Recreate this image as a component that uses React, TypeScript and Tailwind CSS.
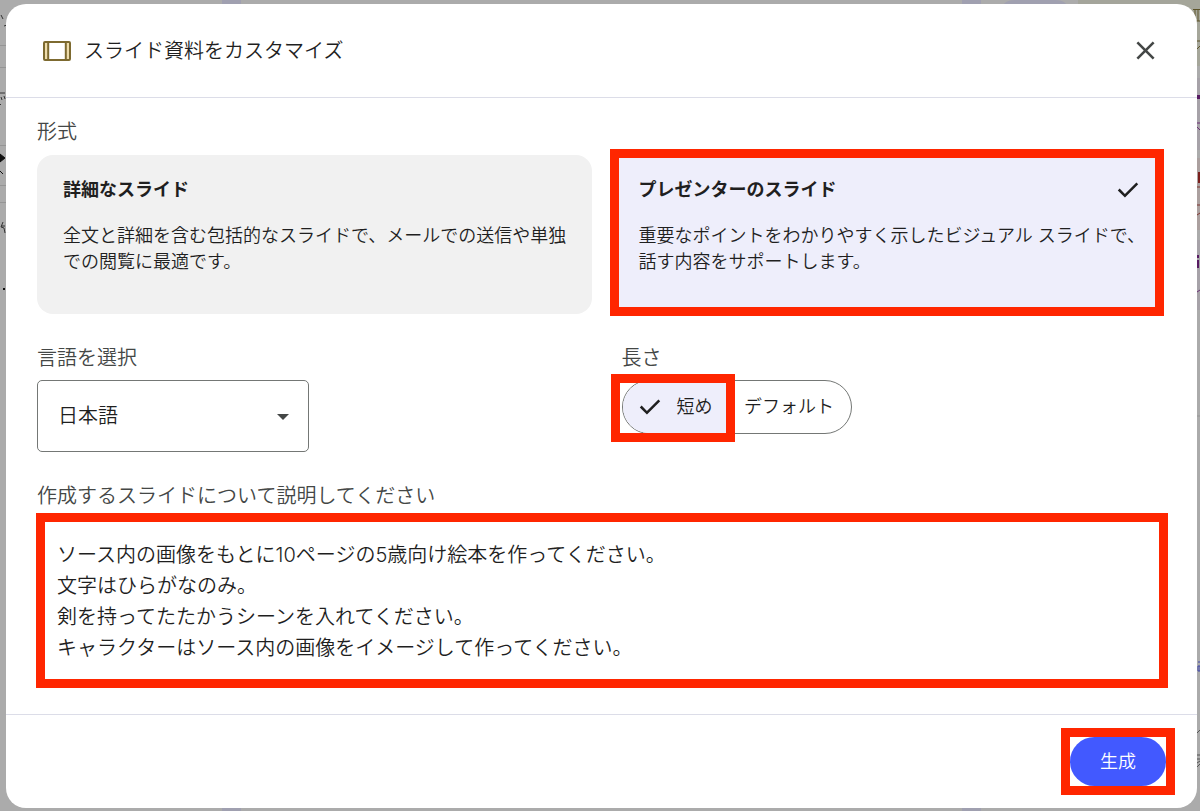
import React, { useState } from "react";

const DEFAULT_PROMPT = `ソース内の画像をもとに10ページの5歳向け絵本を作ってください。
文字はひらがなのみ。
剣を持ってたたかうシーンを入れてください。
キャラクターはソース内の画像をイメージして作ってください。`;

function CheckIcon({ className }: { className?: string }) {
  return (
    <svg viewBox="0 -960 960 960" fill="currentColor" aria-hidden="true" className={className}>
      <path d="M382-240 154-468l57-57 171 171 367-367 57 57-424 424Z" />
    </svg>
  );
}

function CloseIcon() {
  return (
    <svg viewBox="0 -960 960 960" fill="currentColor" aria-hidden="true" className="size-[31px]">
      <path d="m256-200-56-56 224-224-224-224 56-56 224 224 224-224 56 56-224 224 224 224-56 56-224-224-224 224Z" />
    </svg>
  );
}

function SlidesIcon() {
  return (
    <svg viewBox="0 0 30 22" aria-hidden="true" className="h-[22px] w-[30px]">
      <rect x="2" y="2" width="26" height="18" rx="1" fill="#eedcab" />
      <rect x="6" y="2" width="18" height="18" fill="#fff" />
      <rect x="2" y="2" width="26" height="18" rx="1" fill="none" stroke="#7d6a30" strokeWidth="2" />
      <path d="M6.200 2v18M23.800 2v18" stroke="#7d6a30" strokeWidth="2" />
    </svg>
  );
}

// Lo que asoma de la página por detrás del diálogo
function Backdrop() {
  return (
    <div aria-hidden="true" className="absolute inset-0 overflow-hidden bg-[#ababab]">
      <div className="absolute inset-y-0 left-[222px] w-[19px] bg-[#a0a0b0]" />
      <div className="absolute inset-y-0 right-[219px] w-[19px] bg-[#a0a0b0]" />
      <svg viewBox="0 0 8 300" className="absolute top-0 left-0 h-[300px] w-2" fill="none" stroke="#333">
        <path d="M1 15l2 4M4 26l3-1M0 93h5M1 97l1 3M4 96l1 3M0 105l1-1M1 226h4M3 222l-2 5 3 1 1 5" />
        <path d="M0 45.500h8M0 67.500h8M0 145.500h8M0 185.500h8M0 202.500h8" stroke="#959595" />
        <path d="M0 154l5 4-5 4zM0 171l3 3" fill="#111" stroke="#111" />
        <path d="M3 289h2" stroke="#111" strokeWidth="2" />
      </svg>
      <svg viewBox="0 0 200 6" className="absolute top-0 right-0 h-1.5 w-[200px]">
        <path d="M2 6Q6 0 14 0h42q8 0 12 6z" fill="#a0a0b0" />
        <path d="M78 0h122v6H78z" fill="#a4a59b" />
      </svg>
      <svg viewBox="0 0 20 811" className="absolute top-0 right-0 h-[811px] w-5" fill="none">
        <path d="M0 0h20v66H0z" fill="#a5a69a" />
        <path d="M0 78h20v72H0z" fill="#a6a2a8" />
        <path d="M0 158h20v72H0z" fill="#aba09f" />
        <path d="M0 240h20v70H0z" fill="#a6a2a8" />
        <path d="M13 9.500h7M15 10v11h5M18 10v11M17 41h3M17 49l3-3" stroke="#5c5328" />
        <path d="M17 95h3v4h-3zM17 255h2v3h-2zM17 260h2v8h-2z" fill="#571a62" />
        <path d="M17 123h3M17 127l3 3M17 292l3-2" stroke="#6b2f74" />
        <path d="M18 172h2v11h-2z" fill="#7a1f1c" />
        <path d="M17 187h3M17 205h3M17 215l3-2" stroke="#7f3730" />
        <path d="M18 662h2M18 666h2v5h-2z" stroke="#3d45a8" />
        <path d="M17 416h3" stroke="#959595" />
        <path d="M17 733l3-3M17 755h3M17 759h3M17 763l3-2M17 767l3-3" stroke="#555" />
      </svg>
    </div>
  );
}

export default function App() {
  const [format, setFormat] = useState("presenter");
  const [length, setLength] = useState("short");
  const [language, setLanguage] = useState("ja");
  const [prompt, setPrompt] = useState(DEFAULT_PROMPT);

  return (
    <div className="relative min-h-screen py-1 pr-[3px] pl-1.5 font-['Inter','Noto_Sans_CJK_JP',sans-serif] font-[350] text-[#1f1f1f]">
      <Backdrop />

      <div role="dialog" aria-labelledby="dialog-title" className="relative rounded-[20px] bg-white">
        <header className="flex h-[94px] items-center border-b border-[#dcdde8] pr-9 pl-9">
          <SlidesIcon />
          <h1 id="dialog-title" className="ml-3 flex-1 text-xl">
            スライド資料をカスタマイズ
          </h1>
          <button type="button" aria-label="閉じる" className="text-[#444746]">
            <CloseIcon />
          </button>
        </header>

        <main className="pt-5 pr-[33px] pb-[26px] pl-[31px]">
          <h2 className="text-xl text-[#444746]">形式</h2>
          <div className="mt-[3px] grid grid-cols-2 gap-[18px]">
            <button
              type="button"
              aria-pressed={format === "detailed"}
              onClick={() => setFormat("detailed")}
              className="mt-1.5 mb-0.5 flex flex-col rounded-2xl bg-[#f1f1f1] pt-[22px] pr-4 pl-[26px] text-left text-lg leading-[26px]"
            >
              <span className="font-bold">詳細なスライド</span>
              <span className="mt-5">
                全文と詳細を含む包括的なスライドで、メールでの送信や単独での閲覧に最適です。
              </span>
            </button>
            <button
              type="button"
              aria-pressed={format === "presenter"}
              onClick={() => setFormat("presenter")}
              className="flex min-h-[167px] flex-col border-[9px] border-[#ff2600] bg-[#eeeefb] pt-[19px] pr-2 pl-5 text-left text-lg leading-[26px]"
            >
              <span className="flex w-full items-center justify-between pr-1 font-bold">
                プレゼンターのスライド
                <CheckIcon className="-my-0.5 size-[30px]" />
              </span>
              <span className="mt-5">
                重要なポイントをわかりやすく示したビジュアル スライドで、話す内容をサポートします。
              </span>
            </button>
          </div>

          <div className="mt-7 grid grid-cols-2 gap-[18px]">
            <div>
              <label htmlFor="language" className="block text-xl text-[#444746]">
                言語を選択
              </label>
              <div className="relative mt-2 w-[272px]">
                <select
                  id="language"
                  value={language}
                  onChange={(e) => setLanguage(e.target.value)}
                  className="h-[72px] w-full appearance-none rounded-[5px] border border-[#747775] bg-white pl-5 text-xl"
                >
                  <option value="ja">日本語</option>
                  <option value="en">English</option>
                </select>
                <svg
                  viewBox="0 0 12 6"
                  aria-hidden="true"
                  className="pointer-events-none absolute top-[34px] right-5 h-1.5 w-3"
                >
                  <path d="M0 0h12L6 6z" fill="#444746" />
                </svg>
              </div>
            </div>

            <fieldset className="pl-3">
              <legend className="text-xl text-[#444746]">長さ</legend>
              <div className="mt-2 flex h-[54px] w-[230px] rounded-full border border-[#747775]">
                <label className="relative flex w-[109px] items-center rounded-l-full border-r border-[#747775] bg-[#eeeefb] pl-3 text-lg">
                  <input
                    type="radio"
                    name="length"
                    className="sr-only"
                    checked={length === "short"}
                    onChange={() => setLength("short")}
                  />
                  <CheckIcon className="size-[30px]" />
                  <span className="ml-3">短め</span>
                  <span className="pointer-events-none absolute -top-[7px] -right-1 -bottom-[9px] -left-3 border-[9px] border-[#ff2600]" />
                </label>
                <label className="flex flex-1 items-center justify-center pr-1 text-lg">
                  <input
                    type="radio"
                    name="length"
                    className="sr-only"
                    checked={length === "default"}
                    onChange={() => setLength("default")}
                  />
                  デフォルト
                </label>
              </div>
            </fieldset>
          </div>

          <label htmlFor="prompt" className="mt-[30px] block text-xl text-[#444746]">
            作成するスライドについて説明してください
          </label>
          <div className="mt-[3px] -mr-1 -ml-px">
            <textarea
              id="prompt"
              value={prompt}
              onChange={(e) => setPrompt(e.target.value)}
              className="block h-[175px] w-full resize-none border-[9px] border-[#ff2600] px-3 pt-[18px] text-xl leading-[31px] outline-none"
            />
          </div>
        </main>

        <footer className="flex h-[94px] items-center justify-end border-t border-[#dcdde8] pr-[31px]">
          <div className="relative">
            <button type="button" className="block h-[49px] w-24 rounded-full bg-[#4259ff] text-lg text-white">
              生成
            </button>
            <span className="pointer-events-none absolute -inset-[9px] border-[9px] border-[#ff2600]" />
          </div>
        </footer>
      </div>
    </div>
  );
}
